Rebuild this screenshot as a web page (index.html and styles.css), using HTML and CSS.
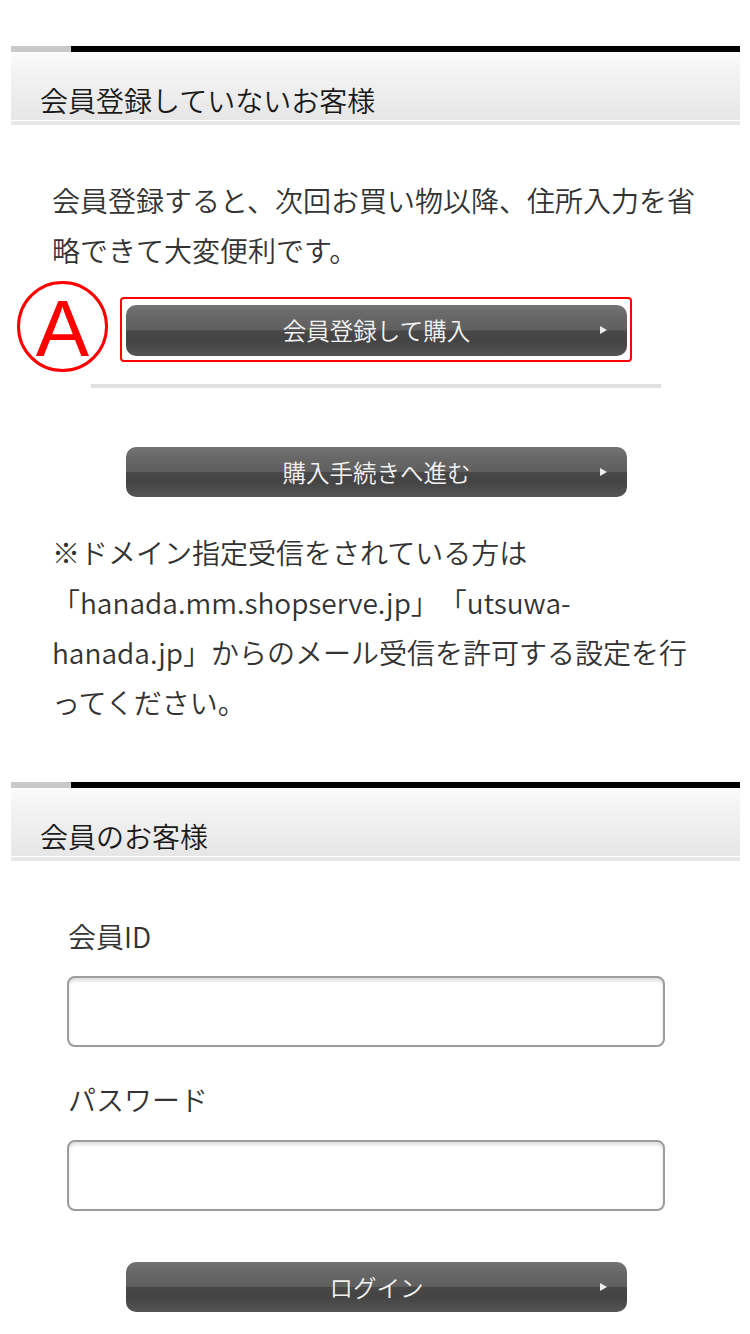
FILE: index.html
```html
<!DOCTYPE html>
<html lang="ja">
<head>
<meta charset="utf-8">
<title>ご購入手続き</title>
<link rel="stylesheet" href="styles.css">
</head>
<body>
<main class="page">
  <section class="panel">
    <h2 class="panel-head"><span class="panel-title">会員登録していないお客様</span></h2>
    <div class="panel-body">
      <p class="text">会員登録すると、次回お買い物以降、住所入力を省略できて大変便利です。</p>
      <div class="highlight">
        <span class="mark">A</span>
        <a class="btn" href="#">会員登録して購入</a>
      </div>
      <hr class="divider">
      <a class="btn btn-solo" href="#">購入手続きへ進む</a>
      <p class="text note">※ドメイン指定受信をされている方は「hanada.mm.shopserve.jp」「utsuwa-hanada.jp」からのメール受信を許可する設定を行ってください。</p>
    </div>
  </section>
  <section class="panel">
    <h2 class="panel-head"><span class="panel-title">会員のお客様</span></h2>
    <div class="panel-body form">
      <label class="label" for="uid">会員ID</label>
      <input class="field" id="uid" type="text">
      <label class="label label-2" for="pw">パスワード</label>
      <input class="field" id="pw" type="password">
      <a class="btn btn-login" href="#">ログイン</a>
    </div>
  </section>
</main>
</body>
</html>
```
FILE: styles.css
```css
* { box-sizing: border-box; }
html, body { margin: 0; padding: 0; background: #fff; }
body {
  font-family: "Noto Sans CJK JP", "Noto Sans", sans-serif;
  font-weight: 350;
  color: #333;
  width: 750px;
  text-spacing-trim: space-all;
}
.page { padding-top: 46px; padding-bottom: 21px; }
.panel { margin-left: 11px; width: 729px; }
.panel-head {
  margin: 0;
  font-weight: 350;
}
.panel-head::before {
  content: "";
  display: block;
  height: 6px;
  background: linear-gradient(to right, #c9c9c9 60px, #000 60px);
}
.panel-title {
  display: block;
  height: 68px;
  padding: 30px 0 0 29px;
  font-size: 28px;
  line-height: 34px;
  color: #1a1a1a;
  background: linear-gradient(to bottom, #fbfbfb 0%, #f3f3f3 30%, #e6e6e6 100%);
  border-top: 1px solid #fff;
}
.panel-head::after {
  content: "";
  display: block;
  height: 6px;
  background: linear-gradient(to bottom, #fff 0, #fff 1px, #e8e8e8 1px, #e8e8e8 5px, #fff 5px);
}
.panel-body { padding: 49px 42px 55px 41px; }
.text {
  margin: 0;
  font-size: 28px;
  line-height: 50px;
  color: #333;
}
.highlight {
  position: relative;
  margin: 22px 0 0 68px;
  width: 512px;
  border: 2px solid #f00;
  border-radius: 4px;
  padding: 6px 3px 4px 4px;
}
.mark {
  position: absolute;
  left: -105px;
  top: -18px;
  width: 91px;
  height: 91px;
  border: 3px solid #f00;
  border-radius: 50%;
  display: flex;
  align-items: center;
  justify-content: center;
  font-family: "Liberation Sans", Arial, sans-serif;
  font-weight: normal;
  font-size: 80px;
  line-height: 1;
  color: #f00;
  padding-top: 4px;
}
.btn {
  position: relative;
  display: block;
  width: 501px;
  height: 51px;
  border-radius: 10px;
  background: linear-gradient(to bottom, #737373 0%, #686868 20%, #5f5f5f 49%, #484848 51%, #444 70%, #555 100%);
  color: #f2f2f2;
  text-decoration: none;
  text-align: center;
  font-size: 23.5px;
  line-height: 51px;
}
.btn::after {
  content: "";
  position: absolute;
  right: 20px;
  top: 21px;
  border-left: 7px solid #eee;
  border-top: 4.5px solid transparent;
  border-bottom: 4.5px solid transparent;
}
.divider {
  margin: 22px 0 0 39px;
  width: 570px;
  height: 4px;
  border: 0;
  background: #e1e1e1;
}
.btn-solo { margin: 59px 0 0 74px; height: 50px; line-height: 50px; }
.note { margin-top: 30px; }
.form { padding: 49px 0 21px 56px; }
.label {
  display: block;
  font-size: 28px;
  line-height: 50px;
  color: #333;
  padding-left: 1px;
}
.label-2 { margin-top: 27px; }
.field {
  display: block;
  margin: 15px 0 0 0;
  width: 598px;
  height: 71px;
  border: 2px solid #9c9c9c;
  border-radius: 8px;
  background: #fff;
  box-shadow: inset 0 3px 3px rgba(0, 0, 0, 0.12);
  font-size: 24px;
  padding: 0 12px;
}
.label-2 + .field { margin-top: 16px; }
.btn-login { margin: 51px 0 0 59px; height: 50px; line-height: 50px; }
```
